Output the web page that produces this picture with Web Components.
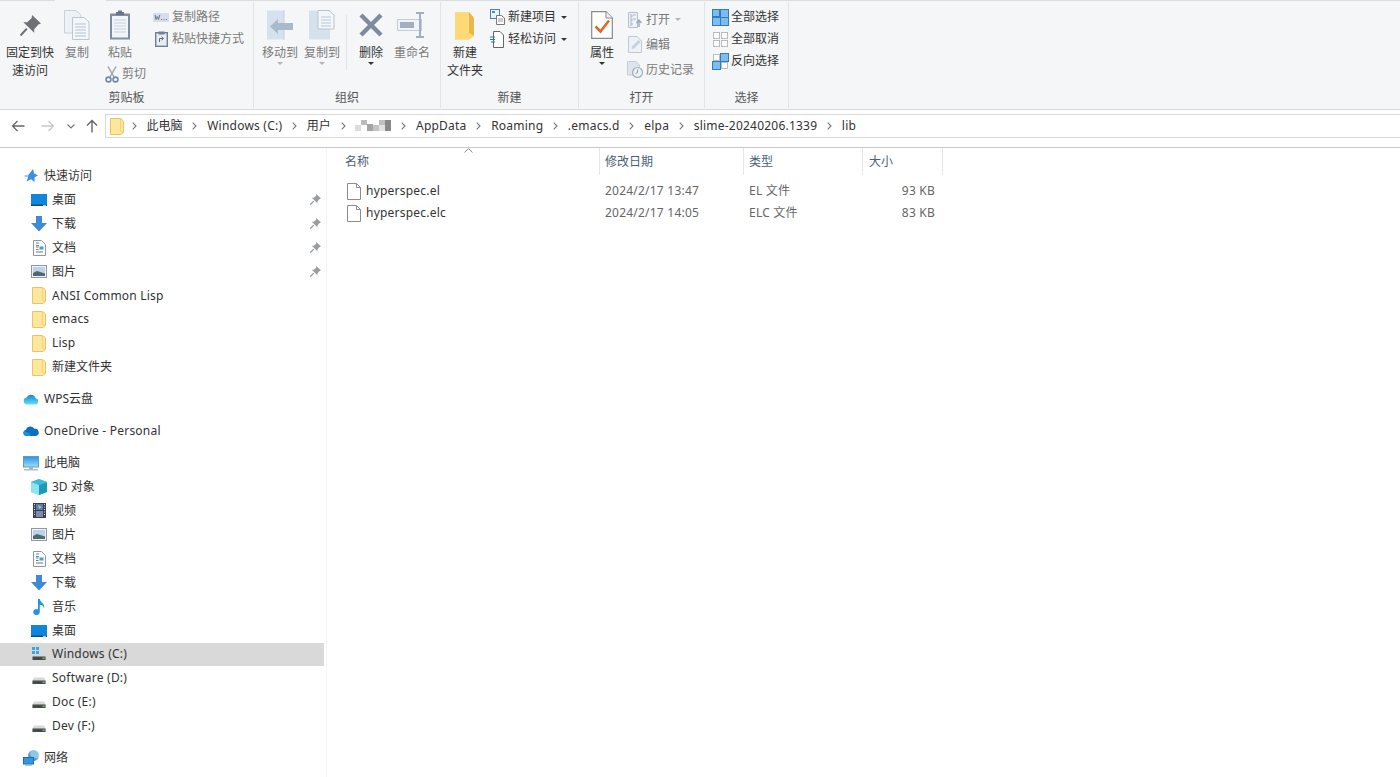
<!DOCTYPE html>
<html lang="zh">
<head>
<meta charset="utf-8">
<title>lib</title>
<style>
html, body { margin: 0; height: 100%; overflow: hidden; background: #fff; }
body { font: 12px/18px "Noto Sans", "Noto Sans CJK SC", sans-serif; color: #333; }
</style>
</head>
<body>
<explorer-window></explorer-window>
<script>
const folderShape = (s) => `<svg viewBox="0 0 14 17" width="${s*14/17}" height="${s}"><path d="M.5 .5H10.5L13.5 3V14.5L11 16.5H.5Z" fill="#fde79c" stroke="#e8c468"/><path d="M10.5 .5V13L13.5 14.5" fill="none" stroke="#f2d27e"/></svg>`;
const drive = (extra) => `<svg viewBox="0 0 16 16" width="16" height="16"><path d="M3 7.5L1.5 10.5V14H14.5V10.5L13 7.5Z" fill="#d8d8d8"/><rect x="1.5" y="10.5" width="13" height="3.5" fill="#484848"/><rect x="11.5" y="11.5" width="2" height="1.5" fill="#5bd35b"/>${extra}</svg>`;
const sq = (x, y, c, b, s = 7) => `<rect x="${x}" y="${y}" width="${s}" height="${s}" fill="${c}" stroke="${b}"/>`;
// latin text in the reference runs a bit wider than Noto Sans at 12px
const spacing = (text) => /[\u4e00-\u9fff]/.test(text) ? '0' : '.22px';

const ICONS = {
  pin: `<svg viewBox="0 0 20 20" width="21" height="21"><path d="M11.5 0L20 8L17.5 9L13.5 13.5L13.5 17L3.2 7L6.8 6.8L11 3Z" fill="#6e7276"/><path d="M6.5 13L0.5 19.5" stroke="#6e7276" stroke-width="2"/></svg>`,
  navpin: `<svg viewBox="0 0 20 20" width="11" height="11"><path d="M11.5 0L20 8L17.5 9L13.5 13.5L13.5 17L3.2 7L6.8 6.8L11 3Z" fill="#9a9ea2"/><path d="M6.5 13L0.5 19.5" stroke="#9a9ea2" stroke-width="2.4"/></svg>`,
  copy: `<svg viewBox="0 0 26 30" width="26" height="30"><path d="M.5 .5H12L17 5V23H.5Z" fill="#eef2f6" stroke="#c9d1da"/><path d="M8.5 7.5H20L25 12V29.5H8.5Z" fill="#f4f7fa" stroke="#bcc6d1"/><path d="M11 14H22M11 17H22M11 20H22M11 23H22M11 26H22" stroke="#b4c3d2"/></svg>`,
  paste: `<svg viewBox="0 0 22 30" width="22" height="30"><rect x="1" y="3.5" width="20" height="26" fill="#7f8fa2"/><rect x="3" y="6" width="16" height="21.5" fill="#f1f4f8"/><path d="M5 10H17M5 13H17M5 16H17M5 19H17M5 22H17" stroke="#c8d2de"/><path d="M7 5V2H9V.5H13V2H15V5Z" fill="#667689"/></svg>`,
  scissors: `<svg viewBox="0 0 14 17" width="14" height="17"><path d="M3 .5L9 11M11 .5L5 11" stroke="#9aa4ae" stroke-width="1.4" fill="none"/><circle cx="3.5" cy="13.5" r="2.4" fill="none" stroke="#6f8aa8" stroke-width="1.6"/><circle cx="10.5" cy="13.5" r="2.4" fill="none" stroke="#6f8aa8" stroke-width="1.6"/></svg>`,
  copypath: `<svg viewBox="0 0 16 9" width="16" height="9"><rect width="16" height="9" fill="#d5deea"/><path d="M2 2L3 6.5L4.3 3.5L5.5 6.5L6.8 2M8 6.5H9M10.5 6.5H11.5M13 6.5H14" stroke="#67758a" fill="none"/></svg>`,
  shortcut: `<svg viewBox="0 0 13 16" width="13" height="16"><rect x=".7" y="1.7" width="11.6" height="13.6" fill="#e9edf2" stroke="#6f8093" stroke-width="1.4"/><rect x="3.5" y=".5" width="6" height="3" fill="#6f8093"/><path d="M4.5 11V7.5H8M6.5 5.8L8.5 7.5L6.5 9.2" stroke="#5d6d80" fill="none"/></svg>`,
  moveto: `<svg viewBox="0 0 28 30" width="28" height="30"><path d="M1 .5H18V29.5H1Z" fill="#d6e1ee"/><path d="M18 0V30" stroke="#c3cfdd"/><path d="M12 9L4 16.5L12 24V20H27V13H12Z" fill="#a9bacd"/></svg>`,
  copyto: `<svg viewBox="0 0 28 30" width="28" height="30"><path d="M1 .5H22V29.5H1Z" fill="#d6e1ee"/><path d="M10 .5H21L26 5V19H10Z" fill="#f4f7fa" stroke="#b7c3d0"/><path d="M13 7H23M13 10H23M13 13H23M13 16H23" stroke="#b7c5d4"/></svg>`,
  del: `<svg viewBox="0 0 26 26" width="26" height="26"><path d="M3 3L23 23M23 3L3 23" stroke="#7c8ba0" stroke-width="4.4"/></svg>`,
  rename: `<svg viewBox="0 0 30 26" width="30" height="26"><rect x=".5" y="7.5" width="24" height="11" fill="#f0f3f7" stroke="#c2ccd8"/><rect x="3" y="10" width="14" height="6" fill="#a2afc0"/><path d="M19 1H27M19 25H27M23 1V25" stroke="#a2afc0" stroke-width="2"/></svg>`,
  newfolder: `<svg viewBox="0 0 20 29" width="20" height="29"><path d="M0 1H14L19 7V25L14 28.5H0Z" fill="#fbd36c"/><path d="M14 1L19 7V25L14 22Z" fill="#e9b84a"/><path d="M0 1H14V22L19 25L14 28.5H0Z" fill="#fdd978"/></svg>`,
  newitem: `<svg viewBox="0 0 15 16" width="15" height="16"><rect x=".5" y=".5" width="9" height="9" fill="#eaf3fb" stroke="#4a7fae"/><rect x="2" y="2" width="3" height="2" fill="#4a90cf"/><path d="M6.5 6.5H11.5L14.5 9V15.5H6.5Z" fill="#fff" stroke="#777"/><path d="M8 10H13M8 12H13" stroke="#999"/></svg>`,
  easy: `<svg viewBox="0 0 14 17" width="14" height="17"><path d="M3.5 .5H10L13.5 4V16.5H3.5Z" fill="#fff" stroke="#666"/><path d="M0 6H5M0 8.5H5M1 11H5" stroke="#1e78c8" stroke-width="1.2"/></svg>`,
  prop: `<svg viewBox="0 0 22 28" width="22" height="28"><path d="M.7 .7H15L21.3 7V27.3H.7Z" fill="#fff" stroke="#8a8a8a" stroke-width="1.2"/><path d="M15 .7V7H21.3" fill="#f0f0f0" stroke="#8a8a8a"/><path d="M4.5 15.5L9.5 20.5L18 9.5" fill="none" stroke="#e3672a" stroke-width="2.6"/></svg>`,
  open: `<svg viewBox="0 0 14 16" width="14" height="16"><path d="M.5 .5H9.5V15.5H.5Z" fill="#eef2f6" stroke="#b5bec9"/><path d="M2 3H4V5H2M5 3H8M2 7H4V9H2M5 7H8M2 11H4V13H2" stroke="#aab6c4" fill="none"/><path d="M11 8V15M8.5 11L11 8L13.5 11" stroke="#9aa7b6" fill="none" stroke-width="1.4"/></svg>`,
  edit: `<svg viewBox="0 0 14 17" width="14" height="17"><path d="M.5 .5H9L13.5 5V16.5H.5Z" fill="#eef2f7" stroke="#bfc8d3"/><path d="M3.5 13L4 10.5L10.5 4L12.5 6L6 12.5Z" fill="#c6d1de"/></svg>`,
  history: `<svg viewBox="0 0 16 17" width="16" height="17"><path d="M.5 .5H9L12.5 4V14H.5Z" fill="#dde4ec" stroke="#c5cdd8"/><circle cx="10.5" cy="11.5" r="5" fill="#eef1f4" stroke="#a2adb9" stroke-width="1.2"/><path d="M10.5 8.5V11.5L8.5 12.5" stroke="#8c98a6" fill="none"/></svg>`,
  selall: `<svg viewBox="0 0 17 17" width="17" height="17">${sq(.5,.5,'#7dbcec','#2d7dc0')}${sq(8.5,.5,'#7dbcec','#2d7dc0',8)}${sq(.5,8.5,'#7dbcec','#2d7dc0',8)}${sq(8.5,8.5,'#7dbcec','#2d7dc0',8)}</svg>`,
  selnone: `<svg viewBox="0 0 17 17" width="17" height="17">${sq(1.5,1.5,'#fff','#bbb',6)}${sq(9.5,1.5,'#fff','#bbb',6)}${sq(1.5,9.5,'#fff','#bbb',6)}${sq(9.5,9.5,'#fff','#bbb',6)}</svg>`,
  selinv: `<svg viewBox="0 0 17 17" width="17" height="17">${sq(1.5,1.5,'#fff','#bbb',6)}${sq(8.5,.5,'#7dbcec','#2d7dc0',8)}${sq(.5,8.5,'#7dbcec','#2d7dc0',8)}${sq(9.5,9.5,'#fff','#bbb',6)}</svg>`,
  back: `<svg viewBox="0 0 14 12" width="14" height="12"><path d="M13.5 6H1.5M6.5 1L1.5 6L6.5 11" fill="none" stroke="#666" stroke-width="1.3"/></svg>`,
  forward: `<svg viewBox="0 0 14 12" width="14" height="12"><path d="M.5 6H12.5M7.5 1L12.5 6L7.5 11" fill="none" stroke="#c8c8c8" stroke-width="1.3"/></svg>`,
  recent: `<svg viewBox="0 0 8 5" width="8" height="5"><path d="M.5 .5L4 4L7.5 .5" fill="none" stroke="#777" stroke-width="1.2"/></svg>`,
  up: `<svg viewBox="0 0 12 14" width="12" height="14"><path d="M6 13.5V1.5M1 6.5L6 1.5L11 6.5" fill="none" stroke="#666" stroke-width="1.4"/></svg>`,
  crumb: `<svg viewBox="0 0 5 8" width="5" height="8"><path d="M.7 .7L4 4L.7 7.3" fill="none" stroke="#777" stroke-width="1.1"/></svg>`,
  blur: `<svg viewBox="0 0 36 16" width="36" height="16" shape-rendering="crispEdges"><rect x="6" y="2" width="6" height="5" fill="#bbb"/><rect x="0" y="7" width="6" height="6" fill="#ddd"/><rect x="12" y="6" width="6" height="7" fill="#a4a4a4"/><rect x="18" y="7" width="6" height="6" fill="#c4c4c4"/><rect x="24" y="2" width="6" height="5" fill="#bfbfbf"/><rect x="30" y="2" width="6" height="11" fill="#888"/><rect x="24" y="7" width="6" height="6" fill="#e2e2e2"/></svg>`,
  folder: folderShape(17),
  file: `<svg viewBox="0 0 14 17" width="14" height="17"><path d="M.5 .5H9.5L13.5 4.5V16.5H.5Z" fill="#fff" stroke="#8c8c8c"/><path d="M9.5 .5V4.5H13.5" fill="none" stroke="#8c8c8c"/></svg>`,
  star: `<svg viewBox="0 0 14 14" width="14" height="14"><path d="M9 0L10.2 4.6L14 6.2L10.6 8.6L10.5 13L7 10.3L2.6 12.5L4 8.2L0 7L4.8 5.4Z" fill="#3f8fdc"/><path d="M0 7L4.8 5.4L4 8.2Z" fill="#a8d2f3"/></svg>`,
  desktop: `<svg viewBox="0 0 16 12" width="16" height="12"><rect width="16" height="12" fill="#0f85dd"/><rect y="10.5" width="16" height="1.5" fill="#0b4f87"/><rect x="12" y="10.8" width="3" height="1" fill="#cde"/></svg>`,
  download: `<svg viewBox="0 0 16 16" width="16" height="16"><path d="M5 0H11V7H16L8 15.5L0 7H5Z" fill="#3d8ad8"/></svg>`,
  docs: `<svg viewBox="0 0 13 16" width="13" height="16"><path d="M.5 .5H8.5L12.5 4.5V15.5H.5Z" fill="#fbfcfd" stroke="#8e97a2"/><path d="M3 3H6M3 5.5H6" stroke="#4a90cf"/><rect x="6.5" y="6.5" width="4" height="3" fill="#4a9ad8"/><path d="M3 7H5.5M3 9.5H5.5M3 12H10" stroke="#777"/></svg>`,
  pictures: `<svg viewBox="0 0 16 13" width="16" height="13"><rect x=".5" y=".5" width="15" height="12" fill="#f2f3f4" stroke="#8e97a2"/><rect x="2" y="2" width="12" height="9" fill="#bcd4ea"/><path d="M2 8L6 6L14 8.5V11H2Z" fill="#4f6872"/></svg>`,
  wps: `<svg viewBox="0 0 16 12" width="16" height="12"><defs><linearGradient id="w" x1="0" y1="0" x2="0" y2="1"><stop offset="0" stop-color="#1788d6"/><stop offset="1" stop-color="#5ee0ee"/></linearGradient></defs><path d="M4 11.5A3.5 3.5 0 0 1 3.4 4.6A5 5 0 0 1 12.6 5.2A3.2 3.2 0 0 1 12.5 11.5Z" fill="url(#w)"/></svg>`,
  onedrive: `<svg viewBox="0 0 16 10" width="16" height="10"><path d="M3.5 10A3.4 3.4 0 0 1 3 3.4A4.6 4.6 0 0 1 11.3 2.8A3.6 3.6 0 0 1 12.8 10Z" fill="#0d6fbe"/><path d="M3.5 10A3 3 0 0 1 1 5L6 7L8 10Z" fill="#1591e0"/></svg>`,
  pc: `<svg viewBox="0 0 16 15" width="16" height="15"><defs><linearGradient id="p" x1="0" y1="0" x2="0" y2="1"><stop offset="0" stop-color="#2a94e4"/><stop offset="1" stop-color="#9fdcf6"/></linearGradient></defs><rect x=".5" y=".5" width="15" height="10.5" fill="url(#p)" stroke="#5a9ccb"/><rect x="6" y="11" width="4" height="2" fill="#a8b0b8"/><rect x="1" y="13" width="14" height="1.5" fill="#b6bcc2"/></svg>`,
  cube: `<svg viewBox="0 0 16 16" width="16" height="16"><path d="M8 0L16 3V13L8 16L0 13V3Z" fill="#58d0e0"/><path d="M0 3L8 6V16L0 13Z" fill="#8ee4ee"/><path d="M16 3L8 6V16L16 13Z" fill="#1a9cb8"/><path d="M8 0L16 3L8 6L0 3Z" fill="#3dbcd6"/></svg>`,
  video: `<svg viewBox="0 0 13 15" width="13" height="15"><rect width="13" height="15" fill="#3c4048"/><rect x="3" y="1" width="7" height="6" fill="#4a7cc8"/><rect x="3" y="8" width="7" height="6" fill="#7a8db0"/><path d="M5 2L9 4L6 6Z" fill="#e8b83c"/><path d="M1 1.5H2M1 4H2M1 6.5H2M1 9H2M1 11.5H2M11 1.5H12M11 4H12M11 6.5H12M11 9H12M11 11.5H12" stroke="#dcdcdc"/></svg>`,
  music: `<svg viewBox="0 0 13 16" width="13" height="16"><path d="M5 0H6.8C7 3.5 12.5 4.5 11 9C10.5 6.8 8.5 6 6.8 5.8V13A3.3 3 0 1 1 5 10.4Z" fill="#1f96e0"/></svg>`,
  drive: drive(''),
  windrive: drive('<rect x="1" y="1" width="3" height="3" fill="#36a7ec"/><rect x="5" y="1" width="3" height="3" fill="#36a7ec"/><rect x="1" y="5" width="3" height="3" fill="#36a7ec"/><rect x="5" y="5" width="3" height="3" fill="#36a7ec"/>'),
  network: `<svg viewBox="0 0 16 16" width="16" height="16"><circle cx="10.5" cy="5.5" r="5.5" fill="#8fc6ea"/><path d="M8 1C6.5 3 7 6 9 7C11 8 13 9 15 8C14 10 12 11 10 11C7 11 5 8 5.5 4Z" fill="#5d97b5"/><rect x=".5" y="7.5" width="10" height="6.5" fill="#2f97e2" stroke="#1a6fb0"/><rect x="2" y="14.5" width="7" height="1.2" fill="#9aa4ad"/></svg>`
};

class AppIcon extends HTMLElement {
  connectedCallback() {
    this.attachShadow({ mode: 'open' }).innerHTML = `
      <style>
        :host { display: inline-flex; align-items: center; justify-content: center; flex: none; }
        svg { display: block; }
      </style>${ICONS[this.getAttribute('name')] || ''}`;
  }
}

class RibbonGroup extends HTMLElement {
  connectedCallback() {
    const width = this.getAttribute('width');
    this.attachShadow({ mode: 'open' }).innerHTML = `
      <style>
        :host { display: flex; flex-direction: column; flex: none; width: ${width}px; height: 106px; box-shadow: 1px 0 0 #e2e3e5; margin-right: 1px; }
        .content { flex: 1; display: flex; min-height: 0; }
        .label { height: 20px; line-height: 20px; text-align: center; color: #555; }
      </style>
      <div class="content"><slot></slot></div>
      <div class="label">${this.getAttribute('label')}</div>`;
  }
}

class BigButton extends HTMLElement {
  connectedCallback() {
    const dim = this.hasAttribute('disabled');
    const caret = this.getAttribute('caret');
    const caretColor = caret === 'dim' ? '#b5b5b5' : '#333';
    this.attachShadow({ mode: 'open' }).innerHTML = `
      <style>
        :host { display: flex; flex-direction: column; align-items: center; flex: none; width: ${this.getAttribute('width')}px; color: ${dim ? '#7a7a7a' : '#333'}; }
        .icon { height: 34px; margin: 6px 0 2px; display: flex; align-items: center; justify-content: center; }
        .text { text-align: center; white-space: pre-line; }
        .caret { width: 0; height: 0; border: 3px solid transparent; border-top: 3px solid ${caretColor}; border-bottom: 0; }
      </style>
      <div class="icon"><app-icon name="${this.getAttribute('icon')}"></app-icon></div>
      <div class="text"><slot></slot></div>
      ${caret ? '<div class="caret"></div>' : ''}`;
  }
}

class SmallButton extends HTMLElement {
  connectedCallback() {
    const dim = this.hasAttribute('disabled');
    const caret = this.getAttribute('caret');
    const h = this.getAttribute('height') || 22;
    const iw = this.getAttribute('iconwidth') || 16;
    this.attachShadow({ mode: 'open' }).innerHTML = `
      <style>
        :host { display: flex; align-items: center; height: ${h}px; white-space: nowrap; color: ${dim ? '#7a7a7a' : '#333'}; }
        .i { width: ${iw}px; display: flex; justify-content: center; margin-right: 3px; flex: none; }
        .caret { width: 0; height: 0; border: 3px solid transparent; border-top: 3px solid ${caret === 'dim' ? '#b5b5b5' : '#333'}; border-bottom: 0; margin-left: 5px; }
      </style>
      <div class="i"><app-icon name="${this.getAttribute('icon')}"></app-icon></div>
      <slot></slot>
      ${caret ? '<div class="caret"></div>' : ''}`;
  }
}

class AppRibbon extends HTMLElement {
  connectedCallback() {
    this.attachShadow({ mode: 'open' }).innerHTML = `
      <style>
        :host { display: flex; position: relative; height: 107px; padding-top: 1px; background: #f5f6f7; border-top: 1px solid #dcdddf; border-bottom: 1px solid #dadbdd; }
        .tab { position: absolute; left: 55px; top: -1px; width: 51px; height: 1px; background: #f5f6f7; }
        .col { display: flex; flex-direction: column; flex: none; }
        .sep { width: 1px; height: 55px; margin: 13px 3px 0 4px; background: #e2e3e5; flex: none; }
      </style>
      <div class="tab"></div>

      <ribbon-group width="253" label="剪贴板">
        <big-button width="60" icon="pin">固定到快
速访问</big-button>
        <big-button width="34" icon="copy" disabled>复制</big-button>
        <div class="col" style="width:52px">
          <big-button width="52" icon="paste" disabled>粘贴</big-button>
          <small-button icon="scissors" iconwidth="14" disabled style="margin:1px 0 0 11px">剪切</small-button>
        </div>
        <div class="col" style="margin-left:7px;padding-top:4px">
          <small-button icon="copypath" disabled>复制路径</small-button>
          <small-button icon="shortcut" disabled>粘贴快捷方式</small-button>
        </div>
      </ribbon-group>

      <ribbon-group width="186" label="组织">
        <big-button width="44" icon="moveto" caret="dim" disabled style="margin-left:4px">移动到</big-button>
        <big-button width="40" icon="copyto" caret="dim" disabled>复制到</big-button>
        <div class="sep"></div>
        <big-button width="42" icon="del" caret="dark">删除</big-button>
        <big-button width="40" icon="rename" disabled>重命名</big-button>
      </ribbon-group>

      <ribbon-group width="137" label="新建">
        <big-button width="44" icon="newfolder" style="margin-left:2px">新建
文件夹</big-button>
        <div class="col" style="margin-left:2px;padding-top:4px">
          <small-button icon="newitem" caret="dark">新建项目</small-button>
          <small-button icon="easy" caret="dark">轻松访问</small-button>
        </div>
      </ribbon-group>

      <ribbon-group width="125" label="打开">
        <big-button width="46" icon="prop" caret="dark">属性</big-button>
        <div class="col" style="margin-left:2px;padding-top:5px">
          <small-button icon="open" height="25" caret="dim" disabled>打开</small-button>
          <small-button icon="edit" height="25" disabled>编辑</small-button>
          <small-button icon="history" height="25" disabled>历史记录</small-button>
        </div>
      </ribbon-group>

      <ribbon-group width="83" label="选择">
        <div class="col" style="margin-left:7px;padding-top:4px">
          <small-button icon="selall">全部选择</small-button>
          <small-button icon="selnone">全部取消</small-button>
          <small-button icon="selinv">反向选择</small-button>
        </div>
      </ribbon-group>`;
  }
}

class AddressBar extends HTMLElement {
  connectedCallback() {
    const crumbs = ['此电脑', 'Windows (C:)', '用户', null, 'AppData', 'Roaming', '.emacs.d', 'elpa', 'slime-20240206.1339', 'lib'];
    const parts = crumbs.map(c => `<app-icon name="crumb"></app-icon>` + (c ? `<span style="letter-spacing:${spacing(c)}">${c}</span>` : `<app-icon name="blur"></app-icon>`)).join('');
    this.attachShadow({ mode: 'open' }).innerHTML = `
      <style>
        :host { display: flex; align-items: flex-start; height: 33px; padding-top: 4px; border-bottom: 1px solid #c9c9c9; background: #fff; }
        .nav { display: flex; align-items: center; flex: none; width: 105px; height: 24px; box-sizing: border-box; padding-left: 11px; }
        .box { flex: 1; height: 22px; display: flex; align-items: center; gap: 9.8px; border: 1px solid #d9d9d9; border-right: 0; padding-left: 4px; color: #333; white-space: nowrap; }
        .box > app-icon:first-child { margin-right: -2px; }
      </style>
      <div class="nav">
        <app-icon name="back"></app-icon>
        <app-icon name="forward" style="margin-left:16px"></app-icon>
        <app-icon name="recent" style="margin-left:12px"></app-icon>
        <app-icon name="up" style="margin-left:11px"></app-icon>
      </div>
      <div class="box"><app-icon name="folder"></app-icon>${parts}</div>`;
  }
}

class NavItem extends HTMLElement {
  connectedCallback() {
    const top = this.hasAttribute('top');
    const pinned = this.hasAttribute('pinned');
    const selected = this.hasAttribute('selected');
    this.attachShadow({ mode: 'open' }).innerHTML = `
      <style>
        :host { display: flex; align-items: center; height: 23.93px; color: #333; white-space: nowrap; letter-spacing: ${spacing(this.textContent)}; ${selected ? 'background: #d9d9d9;' : ''} }
        .i { flex: none; width: 18px; margin-left: ${top ? 22 : 30}px; margin-right: 4px; display: flex; justify-content: center; }
        .t { flex: 1; }
        .p { margin-right: 3px; display: flex; }
      </style>
      <div class="i"><app-icon name="${this.getAttribute('icon')}"></app-icon></div>
      <div class="t"><slot></slot></div>
      ${pinned ? '<div class="p"><app-icon name="navpin"></app-icon></div>' : ''}`;
  }
}

class NavPane extends HTMLElement {
  connectedCallback() {
    this.attachShadow({ mode: 'open' }).innerHTML = `
      <style>
        :host { display: block; flex: none; width: 324px; padding-top: 16px; margin-right: 2px; box-shadow: 2px 0 0 #fff, 3px 0 0 #f4f4f4; box-sizing: border-box; }
        .gap { height: 8px; }
      </style>
      <nav-item top icon="star">快速访问</nav-item>
      <nav-item icon="desktop" pinned>桌面</nav-item>
      <nav-item icon="download" pinned>下载</nav-item>
      <nav-item icon="docs" pinned>文档</nav-item>
      <nav-item icon="pictures" pinned>图片</nav-item>
      <nav-item icon="folder">ANSI Common Lisp</nav-item>
      <nav-item icon="folder">emacs</nav-item>
      <nav-item icon="folder">Lisp</nav-item>
      <nav-item icon="folder">新建文件夹</nav-item>
      <div class="gap"></div>
      <nav-item top icon="wps">WPS云盘</nav-item>
      <div class="gap"></div>
      <nav-item top icon="onedrive">OneDrive - Personal</nav-item>
      <div class="gap"></div>
      <nav-item top icon="pc">此电脑</nav-item>
      <nav-item icon="cube">3D 对象</nav-item>
      <nav-item icon="video">视频</nav-item>
      <nav-item icon="pictures">图片</nav-item>
      <nav-item icon="docs">文档</nav-item>
      <nav-item icon="download">下载</nav-item>
      <nav-item icon="music">音乐</nav-item>
      <nav-item icon="desktop">桌面</nav-item>
      <nav-item icon="windrive" selected>Windows (C:)</nav-item>
      <nav-item icon="drive">Software (D:)</nav-item>
      <nav-item icon="drive">Doc (E:)</nav-item>
      <nav-item icon="drive">Dev (F:)</nav-item>
      <div class="gap"></div>
      <nav-item top icon="network">网络</nav-item>`;
  }
}

class FileRow extends HTMLElement {
  connectedCallback() {
    this.attachShadow({ mode: 'open' }).innerHTML = `
      <style>
        :host { display: grid; grid-template-columns: 274px 144px 119px 80px; height: 22px; align-items: center; color: #666; white-space: nowrap; letter-spacing: .22px; }
        .name { display: flex; align-items: center; gap: 5px; padding-left: 21px; color: #333; }
        .c { padding-left: 5px; }
        .size { text-align: right; padding-right: 8px; }
      </style>
      <div class="name"><app-icon name="file"></app-icon>${this.getAttribute('name')}</div>
      <div class="c">${this.getAttribute('date')}</div>
      <div class="c">${this.getAttribute('type')}</div>
      <div class="size">${this.getAttribute('size')}</div>`;
  }
}

class FileList extends HTMLElement {
  connectedCallback() {
    this.attachShadow({ mode: 'open' }).innerHTML = `
      <style>
        :host { display: block; flex: 1; position: relative; }
        .head { display: grid; grid-template-columns: 274px 144px 119px 80px; height: 27px; color: #4c607a; align-items: center; margin-bottom: 5px; width: 617px; }
        .head div { height: 100%; display: flex; align-items: center; box-sizing: border-box; padding-left: 5px; border-right: 1px solid #e5e5e5; }
        .head div:first-child { padding-left: 19px; }
        .head div:last-child { padding-left: 6px; }
        .sort { position: absolute; left: 138px; top: 0; }
      </style>
      <div class="head"><div>名称</div><div>修改日期</div><div>类型</div><div>大小</div></div>
      <svg class="sort" width="9" height="5" viewBox="0 0 9 5"><path d="M.5 4.5L4.5 .5L8.5 4.5" fill="none" stroke="#8a8a8a"/></svg>
      <file-row name="hyperspec.el" date="2024/2/17 13:47" type="EL 文件" size="93 KB"></file-row>
      <file-row name="hyperspec.elc" date="2024/2/17 14:05" type="ELC 文件" size="83 KB"></file-row>`;
  }
}

class ExplorerWindow extends HTMLElement {
  connectedCallback() {
    this.attachShadow({ mode: 'open' }).innerHTML = `
      <style>
        :host { display: flex; flex-direction: column; height: 777px; overflow: hidden; }
        .main { flex: 1; display: flex; min-height: 0; }
      </style>
      <app-ribbon></app-ribbon>
      <address-bar></address-bar>
      <div class="main"><nav-pane></nav-pane><file-list></file-list></div>`;
  }
}

customElements.define('app-icon', AppIcon);
customElements.define('ribbon-group', RibbonGroup);
customElements.define('big-button', BigButton);
customElements.define('small-button', SmallButton);
customElements.define('app-ribbon', AppRibbon);
customElements.define('address-bar', AddressBar);
customElements.define('nav-item', NavItem);
customElements.define('nav-pane', NavPane);
customElements.define('file-row', FileRow);
customElements.define('file-list', FileList);
customElements.define('explorer-window', ExplorerWindow);
</script>
</body>
</html>
